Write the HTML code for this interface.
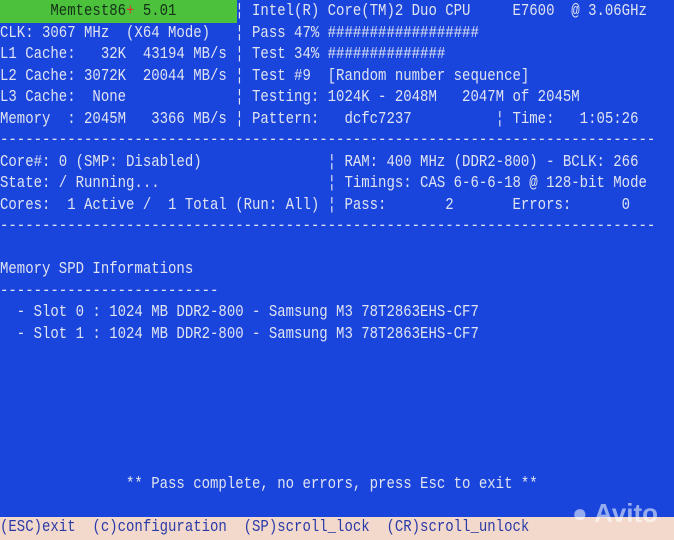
<!DOCTYPE html>
<html><head><meta charset="utf-8"><style>
html,body{margin:0;padding:0;width:674px;height:540px;overflow:hidden;background:#1a45dc;}
.scr{position:absolute;left:0;top:1px;width:820px;transform:scaleX(0.8235);transform-origin:0 0;font-family:"Liberation Mono",monospace;font-size:17px;color:#dfe3f2;white-space:pre;}
.r{position:absolute;left:0;height:21.5px;line-height:21.5px;}
.g{position:absolute;left:0;top:0;width:237px;height:23px;background:#4cc23c;}
.b{position:absolute;left:0;top:517px;width:674px;height:23px;background:#f2d9cc;}
.k{color:#143018;}
.red{color:#e03030;}
.bt{color:#2a3aa8;}
.av{position:absolute;left:572px;top:498px;font-family:"Liberation Sans",sans-serif;font-size:26px;font-weight:bold;color:rgba(255,255,255,0.55);}
</style></head><body>
<div class="g"></div>
<div class="b"></div>
<div class="scr">
<div class="r k" style="top:0">      Memtest86<span class="red">+</span> 5.01</div>
<div class="r" style="top:0">                            ¦ Intel(R) Core(TM)2 Duo CPU     E7600  @ 3.06GHz</div>
<div class="r" style="top:21.5px">CLK: 3067 MHz  (X64 Mode)   ¦ Pass 47% ##################</div>
<div class="r" style="top:43px">L1 Cache:   32K  43194 MB/s ¦ Test 34% ##############</div>
<div class="r" style="top:64.5px">L2 Cache: 3072K  20044 MB/s ¦ Test #9  [Random number sequence]</div>
<div class="r" style="top:86px">L3 Cache:  None             ¦ Testing: 1024K - 2048M   2047M of 2045M</div>
<div class="r" style="top:107.5px">Memory  : 2045M   3366 MB/s ¦ Pattern:   dcfc7237          ¦ Time:   1:05:26</div>
<div class="r" style="top:129px">------------------------------------------------------------------------------</div>
<div class="r" style="top:150.5px">Core#: 0 (SMP: Disabled)               ¦ RAM: 400 MHz (DDR2-800) - BCLK: 266</div>
<div class="r" style="top:172px">State: / Running...                    ¦ Timings: CAS 6-6-6-18 @ 128-bit Mode</div>
<div class="r" style="top:193.5px">Cores:  1 Active /  1 Total (Run: All) ¦ Pass:       2       Errors:      0</div>
<div class="r" style="top:215px">------------------------------------------------------------------------------</div>
<div class="r" style="top:258px">Memory SPD Informations</div>
<div class="r" style="top:279.5px">--------------------------</div>
<div class="r" style="top:301px">  - Slot 0 : 1024 MB DDR2-800 - Samsung M3 78T2863EHS-CF7</div>
<div class="r" style="top:322.5px">  - Slot 1 : 1024 MB DDR2-800 - Samsung M3 78T2863EHS-CF7</div>
<div class="r" style="top:473px">               ** Pass complete, no errors, press Esc to exit **</div>
<div class="r bt" style="top:516px">(ESC)exit  (c)configuration  (SP)scroll_lock  (CR)scroll_unlock</div>
</div>
<div class="av">● Avito</div>
</body></html>
